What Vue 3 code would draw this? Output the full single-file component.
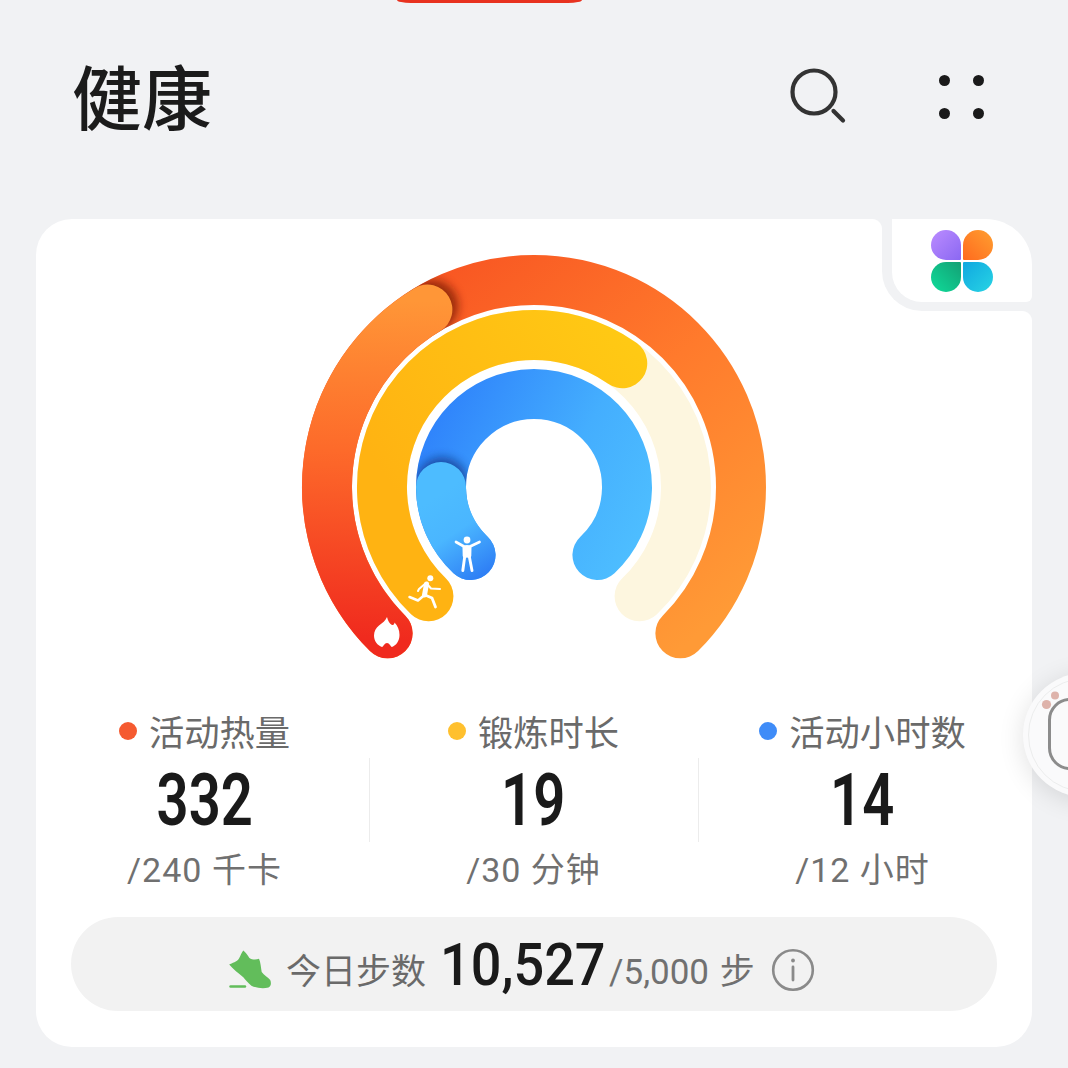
<script setup>
const cx = 533
const cy = 487
function pt(r, a) {
  const t = (a * Math.PI) / 180
  return [cx + r * Math.sin(t), cy - r * Math.cos(t)]
}
function arc(r, a0, a1) {
  const [x0, y0] = pt(r, a0)
  const [x1, y1] = pt(r, a1)
  const large = a1 - a0 > 180 ? 1 : 0
  return `M${x0.toFixed(2)} ${y0.toFixed(2)}A${r} ${r} 0 ${large} 1 ${x1.toFixed(2)} ${y1.toFixed(2)}`
}
const paths = {
  outer: arc(207, -135, 135),
  outerOver: arc(207, -135, -31),
  yTrack: arc(152, -136, 136),
  yFill: arc(152, -136, 35.5),
  blue: arc(93, -137, 137),
  blueOver: arc(93, -137, -90)
}
const stats = [
  { label: '活动热量', value: '332', sub: '/240 千卡', color: '#f55a30' },
  { label: '锻炼时长', value: '19', sub: '/30 分钟', color: '#ffc02e' },
  { label: '活动小时数', value: '14', sub: '/12 小时', color: '#3f8cf8' }
]
</script>

<template>
  <div class="page">
    <div class="topbar"></div>
    <header class="head">
      <h1 class="title">健康</h1>
      <div class="actions">
        <svg class="search" width="64" height="64" viewBox="0 0 64 64" fill="none" stroke="#333" stroke-width="4.2" stroke-linecap="round">
          <circle cx="27" cy="27" r="21.5" />
          <path d="M46.5 46 56 55.5" />
        </svg>
        <div class="dots"><i></i><i></i><i></i><i></i></div>
      </div>
    </header>

    <main class="card">
      <div class="notch">
        <div class="tile">
          <div class="clover">
            <i class="p1"></i><i class="p2"></i><i class="p3"></i><i class="p4"></i>
          </div>
        </div>
      </div>

      <svg class="rings" width="480" height="430" viewBox="293 240 480 430" fill="none">
        <defs>
          <linearGradient id="gOuter" gradientUnits="userSpaceOnUse" x1="400" y1="290" x2="690" y2="640">
            <stop offset="0" stop-color="#f85522" />
            <stop offset=".5" stop-color="#ff7a2c" />
            <stop offset="1" stop-color="#ff9a36" />
          </linearGradient>
          <linearGradient id="gOuterOver" gradientUnits="userSpaceOnUse" x1="385" y1="640" x2="400" y2="300">
            <stop offset="0" stop-color="#f02a1e" />
            <stop offset=".55" stop-color="#fd6a2a" />
            <stop offset="1" stop-color="#ff9637" />
          </linearGradient>
          <linearGradient id="gYellow" gradientUnits="userSpaceOnUse" x1="400" y1="500" x2="640" y2="340">
            <stop offset="0" stop-color="#ffb312" />
            <stop offset="1" stop-color="#ffca14" />
          </linearGradient>
          <linearGradient id="gBlue" gradientUnits="userSpaceOnUse" x1="430" y1="420" x2="640" y2="530">
            <stop offset="0" stop-color="#2f83fb" />
            <stop offset=".6" stop-color="#44aefe" />
            <stop offset="1" stop-color="#4dbdff" />
          </linearGradient>
          <linearGradient id="gBlueOver" gradientUnits="userSpaceOnUse" x1="430" y1="500" x2="480" y2="575">
            <stop offset="0" stop-color="#4dbcff" />
            <stop offset=".45" stop-color="#4ab6ff" />
            <stop offset="1" stop-color="#2f80f5" />
          </linearGradient>
          <filter id="soft" x="-50%" y="-50%" width="200%" height="200%">
            <feGaussianBlur stdDeviation="5" />
          </filter>
          <mask id="mOuter" maskUnits="userSpaceOnUse" x="293" y="240" width="480" height="430">
            <path :d="paths.outer" stroke="#fff" stroke-width="50" stroke-linecap="round" />
          </mask>
          <mask id="mBlue" maskUnits="userSpaceOnUse" x="293" y="240" width="480" height="430">
            <path :d="paths.blue" stroke="#fff" stroke-width="50" stroke-linecap="round" />
          </mask>
        </defs>

        <path :d="paths.outer" stroke="url(#gOuter)" stroke-width="50" stroke-linecap="round" />
        <g mask="url(#mOuter)">
          <circle cx="431" cy="306" r="26" fill="#6d1500" opacity=".7" filter="url(#soft)" />
        </g>
        <path :d="paths.outerOver" stroke="url(#gOuterOver)" stroke-width="50" stroke-linecap="round" />

        <path :d="paths.yTrack" stroke="#fdf6df" stroke-width="50" stroke-linecap="round" />
        <path :d="paths.yFill" stroke="url(#gYellow)" stroke-width="50" stroke-linecap="round" />

        <path :d="paths.blue" stroke="url(#gBlue)" stroke-width="50" stroke-linecap="round" />
        <g mask="url(#mBlue)">
          <circle cx="441" cy="483" r="26" fill="#0f2f7a" opacity=".65" filter="url(#soft)" />
        </g>
        <path :d="paths.blueOver" stroke="url(#gBlueOver)" stroke-width="50" stroke-linecap="round" />

        <!-- flame -->
        <path fill="#fff" d="M386 617C387 621 388.500 623.500 391 625C393 625.500 393.500 623.500 393.500 622.500C396.500 625.500 398.500 630 398.500 635C398.500 641 395 645.500 391 647C389.500 646.500 388.500 643 386 643C383.500 643 382.500 646.500 381 647C376.500 645.500 373 641 373 635.500C373 631 375 628 378 625.500C381.500 623 384.500 620.500 386 617Z" />
        <!-- runner -->
        <g stroke="#fff" stroke-linecap="round" stroke-linejoin="round" fill="none">
          <circle cx="429.300" cy="578.300" r="3" fill="#fff" stroke="none" />
          <path stroke-width="5" d="M425.500 584 423.500 595" />
          <path stroke-width="2" d="M425 583 418 589 417 591M426 584 430 588.500 439 589" />
          <path stroke-width="2.500" d="M423.500 595 417 600.500 408.500 597" />
          <path stroke-width="2.800" d="M424 595 431 598 434.500 607" />
        </g>
        <!-- person -->
        <g stroke="#fff" stroke-linecap="round" stroke-linejoin="round" fill="none">
          <circle cx="466" cy="540" r="3.400" fill="#fff" stroke="none" />
          <path stroke-width="2.700" d="M455 542 463 546.500H469L478.500 542" />
          <path stroke-width="3.600" d="M463.300 547.500 463.500 556M468.700 547.500 468.500 556" />
          <path stroke-width="2.900" d="M463.800 556 461.800 570.500M468.200 556 471 570.500" />
          <path stroke-width="5.500" d="M466 548V555" />
        </g>
      </svg>

      <section class="stats">
        <div v-for="(s, i) in stats" :key="s.label" class="stat" :class="{ divided: i > 0 }">
          <div class="label">
            <span class="dot" :style="{ background: s.color }"></span>{{ s.label }}
          </div>
          <div class="value"><span>{{ s.value }}</span></div>
          <div class="sub">{{ s.sub }}</div>
        </div>
      </section>

      <section class="pill">
        <svg class="shoe" width="44" height="42" viewBox="0 0 44 42">
          <path fill="#62bd5b" d="M15.300 1.500C17.500 3 19.500 6 21.400 9C24 10.800 28 11 31 9.800C32.500 13 33 19 33.700 23C36 26.500 40 28 42.200 31C43.500 34 43 37.500 40.500 38.500C35 40 28 39 23.400 36.700C19.500 33.500 17 30.500 15.300 28.300C10 24 5 20 1.200 15.500C4 14 9 13 11 9.500C12.500 7 13.500 3.500 15.300 1.500Z" />
          <path fill="none" stroke="#62bd5b" stroke-width="2.400" stroke-linecap="round" d="M2.500 37.500H17" />
        </svg>
        <span class="steps-label">今日步数</span>
        <span class="steps">10,527</span>
        <span class="goal">/5,000 步</span>
        <svg class="info" width="44" height="44" viewBox="0 0 44 44" fill="none">
          <circle cx="22" cy="22" r="19.800" stroke="#8a8a8a" stroke-width="2.600" />
          <circle cx="22" cy="12.500" r="1.900" fill="#8a8a8a" />
          <path d="M22 19V32" stroke="#8a8a8a" stroke-width="2.800" stroke-linecap="round" />
        </svg>
      </section>
    </main>

    <aside class="float">
      <span class="frame"></span>
      <svg class="hearts" width="22" height="22" viewBox="0 0 22 22" fill="#deb3ab">
        <circle cx="5.500" cy="14.500" r="4.600" />
        <circle cx="14" cy="5.500" r="4" />
      </svg>
    </aside>
  </div>
</template>

<style>
html, body { margin: 0; background: #f1f2f4; }
</style>

<style scoped>
.page {
  position: relative;
  width: 1068px;
  height: 1068px;
  overflow: hidden;
  background: #f1f2f4;
  font-family: "Noto Sans CJK SC", "Noto Sans", sans-serif;
  color: #666;
}
.topbar {
  position: absolute;
  left: 397px;
  top: 0;
  width: 185px;
  height: 3px;
  background: #e8321f;
  border-radius: 0 0 14px 14px / 0 0 3px 3px;
}
.head {
  height: 219px;
  box-sizing: border-box;
  padding: 47px 84px 0 72px;
  display: flex;
  justify-content: space-between;
  align-items: flex-start;
}
.title {
  margin: 0;
  font-size: 70px;
  line-height: 96px;
  font-weight: 500;
  color: #1b1b1b;
}
.actions {
  display: flex;
  align-items: flex-start;
  gap: 88px;
  padding-top: 11px;
}
.search { display: block; margin-top: 7px; }
.dots {
  display: grid;
  grid-template-columns: 11px 11px;
  gap: 21.500px 23.500px;
  margin-top: 17px;
}
.dots i {
  width: 11px;
  height: 11px;
  border-radius: 50%;
  background: #1a1a1a;
}
.card {
  position: relative;
  width: 996px;
  height: 828px;
  margin-left: 36px;
  background: #fff;
  border-radius: 36px;
  display: flex;
  flex-direction: column;
  align-items: center;
}
.notch {
  position: absolute;
  top: 0;
  right: 0;
  width: 150px;
  height: 92px;
  box-sizing: border-box;
  padding: 0 0 9px 10px;
  background: #f1f2f4;
  border-bottom-left-radius: 40px;
}
.notch::before,
.notch::after {
  content: "";
  position: absolute;
  width: 10px;
  height: 10px;
  background: radial-gradient(circle at 0 100%, #fff 9.500px, #f1f2f4 10.500px);
}
.notch::before { left: -10px; top: 0; }
.notch::after { right: 0; top: 100%; }
.tile {
  height: 100%;
  background: #fff;
  border-radius: 0 46px 6px 30px;
  display: flex;
  align-items: center;
  justify-content: center;
}
.clover {
  display: grid;
  grid-template-columns: 30px 30px;
  grid-auto-rows: 30px;
  gap: 2.500px;
  margin-top: 1px;
}
.clover i { display: block; }
.p1 { border-radius: 50% 50% 1px 50%; background: linear-gradient(135deg, #bb8cff, #8b68f2); }
.p2 { border-radius: 50% 50% 50% 1px; background: linear-gradient(45deg, #ff6a1e, #ff9f30); }
.p3 { border-radius: 50% 1px 50% 50%; background: linear-gradient(45deg, #0fdc9a, #13a074); }
.p4 { border-radius: 1px 50% 50% 50%; background: linear-gradient(135deg, #10a8e0, #28d4e4); }
.rings {
  display: block;
  flex: none;
  margin-top: 21px;
}
.stats {
  flex: none;
  width: 987px;
  margin: 39px 0 0 -1px;
  display: grid;
  grid-template-columns: repeat(3, 1fr);
}
.stat {
  position: relative;
  display: flex;
  flex-direction: column;
  align-items: center;
}
.stat.divided::before {
  content: "";
  position: absolute;
  left: 0;
  top: 49px;
  width: 1px;
  height: 84px;
  background: #ececec;
}
.label {
  display: flex;
  align-items: center;
  height: 44px;
  font-size: 35.300px;
  line-height: 44px;
  color: #6a6a6a;
}
.dot {
  width: 18px;
  height: 18px;
  border-radius: 50%;
  margin-right: 12px;
}
.value {
  height: 95px;
  font-family: Roboto, sans-serif;
  font-size: 72px;
  line-height: 96px;
  font-weight: 600;
  color: #1a1a1a;
}
.value span {
  display: inline-block;
  transform: scaleX(.78);
}
.sub {
  height: 44px;
  font-family: Roboto, "Noto Sans CJK SC", sans-serif;
  font-size: 34px;
  line-height: 44px;
  letter-spacing: 1px;
  color: #707070;
}
.pill {
  flex: none;
  width: 926px;
  height: 94px;
  box-sizing: border-box;
  padding: 10px 0 0 157px;
  margin-top: 25px;
  border-radius: 47px;
  background: #f2f2f2;
  display: flex;
  align-items: center;
  justify-content: flex-start;
}
.shoe { display: block; margin: 2px 14px 0 0; }
.steps-label {
  font-size: 35px;
  line-height: 44px;
  color: #6a6a6a;
  margin-right: 14px;
}
.steps {
  display: inline-block;
  width: 169px;
  font-family: Roboto, sans-serif;
  font-size: 60px;
  line-height: 70px;
  font-weight: 500;
  color: #1a1a1a;
  white-space: nowrap;
  transform: scaleX(.9);
  transform-origin: 0 50%;
  margin-top: -8px;
}
.goal {
  font-family: Roboto, "Noto Sans CJK SC", sans-serif;
  font-size: 35px;
  line-height: 44px;
  color: #707070;
  word-spacing: 2px;
  margin: 8px 16px 0 0;
  white-space: nowrap;
}
.info { display: block; margin-top: 2px; }
.float {
  position: absolute;
  left: 1023px;
  top: 673px;
  width: 124px;
  height: 124px;
  box-sizing: border-box;
  border-radius: 50%;
  background: #fafafb;
  box-shadow: 0 4px 26px rgba(0, 0, 0, .12);
}
.float::before {
  content: "";
  position: absolute;
  inset: 5px;
  border-radius: 50%;
  border: 1px solid #eceded;
}
.frame {
  position: absolute;
  left: 25px;
  top: 25px;
  width: 70px;
  height: 72px;
  box-sizing: border-box;
  border: 3px solid #8c8c8c;
  border-radius: 22px;
}
.hearts {
  position: absolute;
  left: 18px;
  top: 17px;
}
</style>
